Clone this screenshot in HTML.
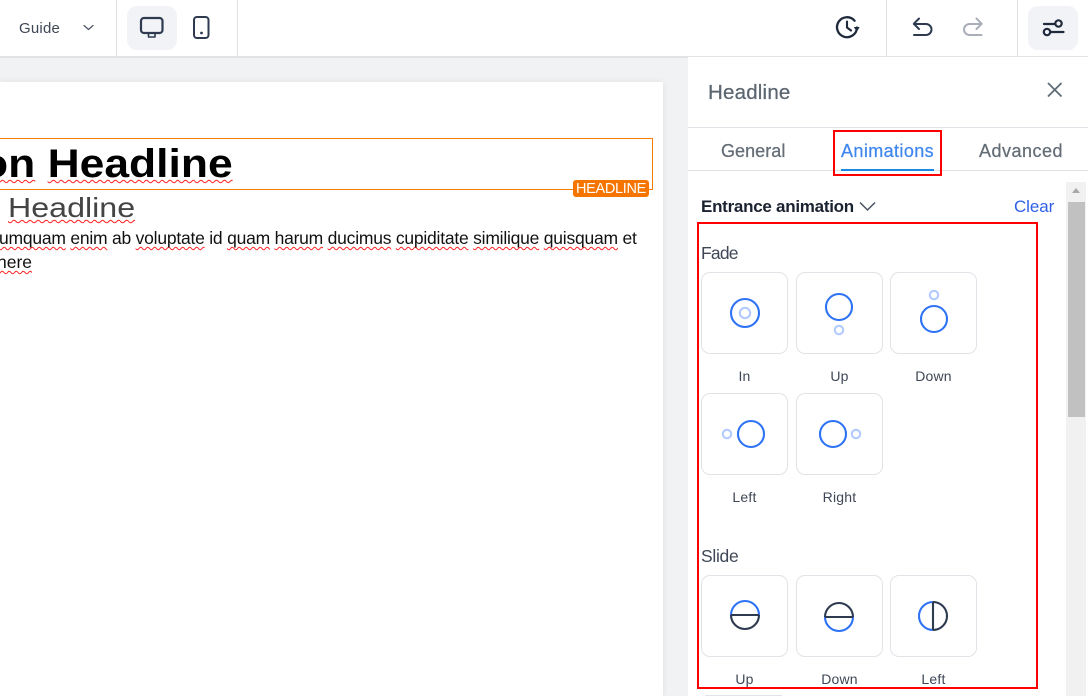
<!DOCTYPE html>
<html><head><meta charset="utf-8">
<style>
html,body{margin:0;padding:0;background:#fff;width:1088px;height:696px;overflow:hidden}
#r{position:relative;width:1088px;height:696px;overflow:hidden;background:#fff;font-family:"Liberation Sans",sans-serif}
.a{position:absolute}
.t{position:absolute;white-space:nowrap}
.w{text-decoration:underline wavy #f22;text-decoration-thickness:1.3px;text-underline-offset:2px;text-decoration-skip-ink:none}
.c{position:absolute;width:85px;height:80px;border:1px solid #e2e3e8;border-radius:9px;background:#fff}
.l{position:absolute;width:87px;text-align:center;font-size:14px;color:#3f4756;line-height:16px;letter-spacing:.2px}
.m{-webkit-text-stroke:.25px currentColor}
</style></head><body>
<div id="r">
<div class="a" style="left:0;top:57px;width:688px;height:639px;background:#f1f2f4"></div>
<div class="a" style="left:0;top:82px;width:663px;height:614px;background:#fff;box-shadow:0 0 6px rgba(0,0,0,.08)"></div>
<div class="a" style="left:0;top:0;width:1088px;height:56px;background:#fff;border-bottom:2px solid #e2e3e6"></div>
<div class="a" style="left:116px;top:0;width:1px;height:56px;background:#dfe0e4"></div>
<div class="a" style="left:237px;top:0;width:1px;height:56px;background:#dfe0e4"></div>
<div class="a" style="left:886px;top:0;width:1px;height:56px;background:#dfe0e4"></div>
<div class="a" style="left:1017px;top:0;width:1px;height:56px;background:#dfe0e4"></div>
<div class="a" style="left:127px;top:6px;width:50px;height:44px;border-radius:10px;background:#f2f3f7"></div>
<div class="a" style="left:1028px;top:6px;width:50px;height:44px;border-radius:10px;background:#f2f3f7"></div>
<div class="t" style="left:19px;top:20px;font-size:15px;line-height:18px;color:#3f4756;letter-spacing:.2px">Guide</div>

<svg class="a" style="left:0;top:0" width="1088" height="56" fill="none" stroke-linecap="round" stroke-linejoin="round">
<path d="M84 25.500l4.500 4 4.500-4" stroke="#4a5261" stroke-width="1.200"/>
<rect x="141" y="18" width="21.500" height="15" rx="3" stroke="#2d3a50" stroke-width="2.200"/>
<path d="M148.500 34v3h6.500v-3" stroke="#2d3a50" stroke-width="1.600"/>
<rect x="194" y="17" width="14.500" height="21" rx="3" stroke="#2d3a50" stroke-width="2"/>
<circle cx="201.500" cy="33" r="1.400" fill="#2d3a50"/>
<path d="M857 27.500a10 10 0 1 1-2.400-6.800" stroke="#1f2a3d" stroke-width="2.300"/>
<path d="M847 21.500v6l4 3" stroke="#1f2a3d" stroke-width="2.100"/>
<path d="M854.500 27.500h4.500l-2.200 3z" fill="#1f2a3d" stroke="#1f2a3d" stroke-width="1"/>
<path d="M914 24h12a5.500 5.500 0 0 1 0 11H914" stroke="#2d3a50" stroke-width="2"/>
<path d="M919 18.500l-5.200 5.300 5.200 5.200" stroke="#2d3a50" stroke-width="2"/>
<path d="M981.500 24h-12a5.500 5.500 0 0 0 0 11H981.500" stroke="#a9aeb7" stroke-width="2"/>
<path d="M976.500 18.500l5.200 5.300-5.200 5.200" stroke="#a9aeb7" stroke-width="2"/>
<path d="M1044 24h11M1051 32h12.500" stroke="#1f2a3d" stroke-width="2.200"/>
<circle cx="1058.500" cy="23.500" r="3.200" stroke="#1f2a3d" stroke-width="2.200"/>
<circle cx="1047" cy="32" r="3.200" stroke="#1f2a3d" stroke-width="2.200"/>
</svg>

<div class="a" style="left:-1px;top:138px;width:652px;height:50px;border:1px solid #f57c00"></div>
<div class="t" style="left:-19.500px;top:142px;font-size:40px;line-height:44px;font-weight:bold;color:#000;transform:scaleX(1.11);transform-origin:0 0"><span class="w">on</span> <span class="w">Headline</span></div>
<div class="t" style="left:8px;top:191px;font-size:28px;line-height:34px;color:#444;transform:scaleX(1.15);transform-origin:0 0"><span class="w">Headline</span></div>
<div class="t" style="left:-1px;top:228px;font-size:17.500px;line-height:20px;color:#111;letter-spacing:-.23px"><span class="w">umquam</span> <span class="w">enim</span> ab <span class="w">voluptate</span> id <span class="w">quam</span> <span class="w">harum</span> <span class="w">ducimus</span> <span class="w">cupiditate</span> <span class="w">similique</span> <span class="w">quisquam</span> et</div>
<div class="t" style="left:-3px;top:252px;font-size:17.500px;line-height:20px;color:#111"><span class="w">here</span></div>
<div class="t" style="left:573px;top:180px;width:76px;height:17px;background:#f57500;border-radius:3px;color:#fff;font-size:14.500px;line-height:18px;text-align:center;letter-spacing:-.3px">HEADLINE</div>

<div class="a" style="left:688px;top:57px;width:400px;height:639px;background:#fff"></div>
<div class="t m" style="left:708px;top:81px;font-size:20.500px;line-height:24px;color:#5c6670;letter-spacing:.2px">Headline</div>
<svg class="a" style="left:1040px;top:78px" width="30" height="24" fill="none"><path d="M8 5l13.500 13.500M21.500 5L8 18.500" stroke="#5f6c75" stroke-width="1.800"/></svg>
<div class="a" style="left:688px;top:127px;width:400px;height:1px;background:#dfe2e6"></div>
<div class="a" style="left:688px;top:170px;width:400px;height:1px;background:#dfe2e6"></div>
<div class="t m" style="left:721px;top:140px;font-size:18px;line-height:22px;color:#646d76;letter-spacing:.05px">General</div>
<div class="t m" style="left:841px;top:140px;font-size:18px;line-height:22px;color:#3f87ee;letter-spacing:.4px">Animations</div>
<div class="t m" style="left:979px;top:140px;font-size:18px;line-height:22px;color:#646d76;letter-spacing:.5px">Advanced</div>
<div class="a" style="left:841px;top:169px;width:93px;height:2px;background:#1e88e5"></div>
<div class="a" style="left:833px;top:130px;width:105px;height:42px;border:2px solid #f00"></div>

<div class="a" style="left:1066px;top:182px;width:20px;height:514px;background:#f1f1f1"></div>
<div class="a" style="left:1068px;top:202px;width:17px;height:215px;background:#c1c1c1"></div>
<div class="a" style="left:1072px;top:188px;width:0;height:0;border-left:4.500px solid transparent;border-right:4.500px solid transparent;border-bottom:5px solid #a8a8a8"></div>

<div class="t" style="left:701px;top:197px;font-size:17px;line-height:20px;font-weight:bold;color:#1a2130;letter-spacing:-.27px">Entrance animation</div>
<svg class="a" style="left:858px;top:200px" width="20" height="14" fill="none"><path d="M2 2.500l7.500 7.500 7.500-7.500" stroke="#4a5261" stroke-width="1.500"/></svg>
<div class="t" style="left:1014px;top:197px;font-size:17px;line-height:20px;color:#2f5fe8;letter-spacing:-.1px">Clear</div>

<div class="t" style="left:701px;top:243px;font-size:17.500px;line-height:20px;color:#3f4756;letter-spacing:-.8px">Fade</div>
<div class="c" style="left:701px;top:272px"></div>
<div class="c" style="left:796px;top:272px"></div>
<div class="c" style="left:890px;top:272px"></div>
<div class="l" style="left:701px;top:368px">In</div>
<div class="l" style="left:796px;top:368px">Up</div>
<div class="l" style="left:890px;top:368px">Down</div>
<div class="c" style="left:701px;top:393px"></div>
<div class="c" style="left:796px;top:393px"></div>
<div class="l" style="left:701px;top:489px">Left</div>
<div class="l" style="left:796px;top:489px">Right</div>
<div class="t" style="left:701px;top:546px;font-size:17.500px;line-height:20px;color:#3f4756;letter-spacing:-.3px">Slide</div>
<div class="c" style="left:701px;top:575px"></div>
<div class="c" style="left:796px;top:575px"></div>
<div class="c" style="left:890px;top:575px"></div>
<div class="l" style="left:701px;top:671px">Up</div>
<div class="l" style="left:796px;top:671px">Down</div>
<div class="l" style="left:890px;top:671px">Left</div>
<div class="a" style="left:705px;top:695px;width:77px;height:1px;background:#e2e3e8"></div>

<svg class="a" style="left:0;top:0" width="1088" height="696" fill="none" stroke-width="2.100">
<g stroke="#2f73f5">
<circle cx="745" cy="313" r="14"/><circle cx="839" cy="307" r="13"/><circle cx="934" cy="319" r="13"/>
<circle cx="751" cy="434" r="13"/><circle cx="833" cy="434" r="13"/>
</g>
<g stroke="#b3caff">
<circle cx="745" cy="313" r="5.200"/><circle cx="839" cy="330" r="4.200"/><circle cx="934" cy="295" r="4.200"/>
<circle cx="727" cy="434" r="4.200"/><circle cx="856" cy="434" r="4.200"/>
</g>
<path d="M731 615a14 14 0 0 1 28 0" stroke="#2f73f5"/>
<path d="M731 615a14 14 0 0 0 28 0M731 615h28" stroke="#2d3a50"/>
<path d="M825 617a14 14 0 0 0 28 0" stroke="#2f73f5"/>
<path d="M825 617a14 14 0 0 1 28 0M825 617h28" stroke="#2d3a50"/>
<path d="M933 602a14 14 0 0 0 0 28" stroke="#2f73f5"/>
<path d="M933 602a14 14 0 0 1 0 28M933 602v28" stroke="#2d3a50"/>
</svg>
<div class="a" style="left:697px;top:222px;width:337px;height:463px;border:2px solid #f00"></div>
</div>
</body></html>
